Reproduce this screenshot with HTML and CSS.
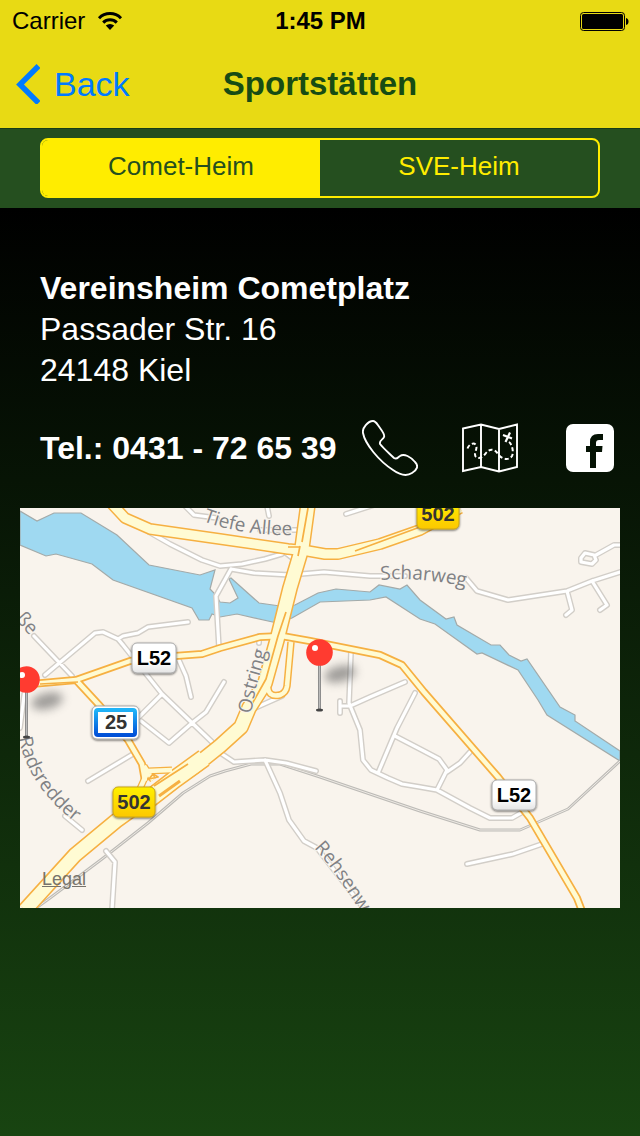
FILE: index.html
```html
<!DOCTYPE html>
<html lang="de">
<head>
<meta charset="utf-8">
<meta name="viewport" content="width=device-width, initial-scale=1">
<title>Sportstätten</title>
<link rel="stylesheet" href="styles.css">
</head>
<body>
<header class="top">
  <div class="status">
    <div class="status-left">
      <span>Carrier</span>
      <svg class="wifi" viewBox="0 0 26 20" aria-hidden="true">
        <path d="M2 7.2A15.500 15.500 0 0 1 24 7.200" fill="none" stroke="#000" stroke-width="3"/>
        <path d="M6.200 11.600A9.500 9.500 0 0 1 19.800 11.600" fill="none" stroke="#000" stroke-width="3"/>
        <path d="M8.800 14.600A6 6 0 0 1 17.200 14.600L13 19z"/>
      </svg>
    </div>
    <span class="clock">1:45 PM</span>
    <svg class="battery" viewBox="0 0 50 20" aria-hidden="true">
      <rect x="1.500" y="1.500" width="44" height="18" rx="3" fill="none" stroke="#000"/>
      <rect x="3" y="3" width="41" height="15" rx="1.500"/>
      <path d="M47 7Q49.500 7.500 49.500 10.500T47 14z"/>
    </svg>
  </div>
  <nav class="nav">
    <a class="back" href="#">
      <svg class="chevron" viewBox="0 0 24 40" aria-hidden="true"><path d="M22.500 2L4 20.500L22.500 39" fill="none" stroke="#007aff" stroke-width="5.500"/></svg>
      <span>Back</span>
    </a>
    <h1 class="title">Sportstätten</h1>
  </nav>
</header>

<div class="filter">
  <div class="segments" role="group" aria-label="Vereinsheim">
    <button class="segment segment-on" type="button" aria-pressed="true">Comet-Heim</button>
    <button class="segment" type="button" aria-pressed="false">SVE-Heim</button>
  </div>
</div>

<main class="content">
  <address class="address">
    <strong>Vereinsheim Cometplatz</strong>
    <span>Passader Str. 16</span>
    <span>24148 Kiel</span>
  </address>
  <div class="contact">
    <strong class="phone-number">Tel.: 0431 - 72 65 39</strong>
    <a class="action" href="tel:+49431726539" aria-label="Anrufen">
      <svg class="icon" viewBox="0 0 56 56" aria-hidden="true"><path d="M1 13C0 8 6 1 11 1C14 1 15 4 18 8C21 12 23 15 22 17C21 20 17 20 18 24C22 29 28 34 32 38C35 40 36 37 38 36C42 33 49 37 53 42C57 46 55 50 50 53C44 57 38 55 31 50C17 41 3 24 1 13Z" fill="none" stroke="#fff" stroke-width="1.900"/></svg>
    </a>
    <button class="action" type="button" aria-label="Route anzeigen">
      <svg class="icon" viewBox="0 0 56 56" aria-hidden="true" fill="none" stroke="#fff">
        <path d="M1 8.500L19 4.500L37 9L55 4.500V47L37 51.500L19 47L1 51ZM19 4.500V47M37 9V51.500" stroke-width="1.900"/>
        <path d="M5.500 28.500C7 24 12 22 14 25C16 29 11 34 14 37C17 40 22 36 24 33C28 28 33 29 36 34C39 39 47 41 50 36C52 32 50 24 47 22" stroke-width="2" stroke-dasharray="4 2.500"/>
        <path d="M41 15L50 18.500M48 12.500L43.500 22" stroke-width="2.200"/>
      </svg>
    </button>
    <a class="action" href="#" aria-label="Facebook">
      <svg class="icon" viewBox="0 0 56 56" aria-hidden="true"><rect x="4" y="4" width="48" height="48" rx="7" fill="#fff"/><path d="M28 48V32H24V26H28V22Q28 14 36 14H41V20H37Q34 20 34 23V26H40.500L40 32H34V48Z" fill="#051204"/></svg>
    </a>
  </div>

  <section class="map" aria-label="Karte">
    <svg class="map-canvas" viewBox="0 0 600 400" preserveAspectRatio="xMidYMid slice" role="img" aria-label="Karte der Umgebung">
      <defs>
        <linearGradient id="white-sign" x1="0" y1="0" x2="0" y2="1"><stop offset=".6" stop-color="#fff"/><stop offset="1" stop-color="#e4e4e4"/></linearGradient>
        <linearGradient id="yellow-sign" x1="0" y1="0" x2="0" y2="1"><stop offset="0" stop-color="#fff000"/><stop offset="1" stop-color="#fcc800"/></linearGradient>
        <linearGradient id="blue-sign" x1="0" y1="0" x2="0" y2="1"><stop offset="0" stop-color="#20b4f8"/><stop offset="1" stop-color="#0050d8"/></linearGradient>
        <linearGradient id="needle" x1="0" y1="0" x2="1" y2="0"><stop offset="0" stop-color="#777"/><stop offset=".5" stop-color="#bbb"/><stop offset="1" stop-color="#777"/></linearGradient>
        <filter id="soft" x="-50%" y="-100%" width="200%" height="300%"><feGaussianBlur stdDeviation="5"/></filter>
        <filter id="sign-shadow" x="-20%" y="-20%" width="140%" height="150%"><feDropShadow dx="0" dy="1" stdDeviation="1" flood-opacity=".6"/></filter>
        <path id="streets" d="M165 -2L174 7L197 10M129 24L150 36L182 52L200 58L222 56L245 51L262 46M240 22H281L288 30M326 6L354 -3M249 8L247 -2M211 61L234 65L270 67L304 64L350 68L385 68M211 61L196 88L199 140M262 42L275 52M446 70L457 83L488 92L547 83L572 73L600 64M547 83L552 102L546 107M572 73L587 97L580 102M576 47L594 37L602 37M561 50L565 45L574 47L576 52L572 56L561 54ZM14 128L52 168M25 167L75 125L83 124L98 131L103 137L142 186L192 234L202 246L214 254L245 252L266 255L296 263M98 131L103 128L118 125L128 119L168 114M158 150L166 168L171 189M142 186L118 210M204 174L186 204L172 215L149 235L121 213M68 273L113 246M86 343L95 354L92 402M245 252L260 285L269 312L284 333L297 340L345 402M331 144L329 195L340 222L343 252L351 262L368 270L382 276L400 279L417 282L450 300L470 310L492 310L506 302M320 193V205M320 198H330L350 189L385 174M395 185L377 220L358 265M375 228L400 241L419 251L427 262L417 282M427 264L440 255L450 244M447 356L493 346L525 335M0 220L5 180M45 308L62 322M239 128V135M235 200L262 188"/>
        <path id="slip" d="M248 176Q247 190 260 187Q266 185 267 178L271 134"/>
        <path id="trunk" d="M92 -4L105 10L130 21L200 31L268 41L288 43L305 46L318 46L360 36L400 22L440 0"/>
        <path id="local" d="M0 177L56 172L110 153L155 148L182 146L200 140L240 129L262 128L290 133L360 147L382 157L404 184L478 269L510 310L557 390L562 403M56 172L80 198L108 232L122 256L125 273"/>
        <path id="main" d="M288 -4L282 40L270 80L257 132L245 175L229 200L221 219L200 238L175 258L142 280L96 313L55 347L5 402"/>
        <path id="merge" d="M124 295L155 271L184 250"/>
        <path id="ramps" d="M118 285L128 263L152 262M124 258L133 272"/>
        <path id="ostring-line" d="M231 206L236 180L249 134"/>
        <path id="tiefe-line" d="M183 13Q225 29 284 27"/>
        <path id="scharweg-line" d="M361 72Q400 68 456 81"/>
        <path id="rads-line" d="M-1 230Q8 280 60 318"/>
        <path id="rehsen-line" d="M294 340Q314 361 350 419"/>
        <path id="strasse-line" d="M-5 111L18 137"/>
      </defs>
      <rect width="600" height="400" fill="#f9f4ed"/>
      <path d="M0 3L17 13L34 5H61L97 27L129 57L180 67L195 62L190 81L196 87L200 94L210 95L218 90L209 71L211 70L239 95L260 98L275 97L298 85L316 81L350 84L359 77L380 81L387 77L400 92L426 111L434 109L437 117L471 137H480L489 147L501 153L507 151L540 199L555 207V213L600 243V253L527 207L518 192L498 162L462 145L457 146L415 116L400 111L366 89L350 92L300 94L272 110L257 115L217 106L200 109L192 106L189 112H179L172 100L93 72L72 56L36 46L26 48L0 37Z" fill="#9fd9f1" stroke="#a3aaa9" stroke-width="1.200"/>
      <g fill="none" stroke-linejoin="round">
        <path d="M12 403L30 390L82 351L128 315L163 285L190 268L205 263L231 256H260L300 269L400 303L460 322H500L548 301L600 253" stroke="#bdbbb7" stroke-width="3"/>
        <path d="M12 403L30 390L82 351L128 315L163 285L190 268L205 263L231 256H260L300 269L400 303L460 322H500L548 301L600 253" stroke="#eeeae4"/>
        <use href="#streets" stroke="#d2cec8" stroke-width="6" stroke-linecap="round"/>
        <use href="#streets" stroke="#fff" stroke-width="3.200" stroke-linecap="round"/>
        <g stroke="#f6b042">
          <use href="#slip" stroke-width="7.500"/>
          <use href="#trunk" stroke-width="12"/>
          <use href="#local" stroke-width="8"/>
          <use href="#main" stroke-width="16"/>
          <use href="#merge" stroke-width="19"/>
          <use href="#ramps" stroke-width="7"/>
        </g>
        <g stroke="#fffbd3">
          <use href="#slip" stroke-width="4.500"/>
          <use href="#trunk" stroke-width="9"/>
          <use href="#local" stroke-width="4.500"/>
          <use href="#main" stroke-width="13"/>
          <use href="#merge" stroke-width="16"/>
          <use href="#ramps" stroke-width="4.500"/>
        </g>
        <path d="M288 0L282 34M280 38L278 48M266 104L258 128L246 171L232 196M335 43L400 19M268 39H279M20 176L58 174M129 271L133 266L138 269ZM134 278L168 256" stroke="#f6b042" stroke-width="1.700"/>
        <path d="M139 288L160 273" stroke="#f6b042" stroke-width="3"/>
      </g>

      <g class="street-name">
        <text><textPath href="#tiefe-line">Tiefe Allee</textPath></text>
        <text><textPath href="#scharweg-line">Scharweg</textPath></text>
        <text><textPath href="#ostring-line">Ostring</textPath></text>
        <text><textPath href="#rads-line">Radsredder</textPath></text>
        <text><textPath href="#rehsen-line">Rehsenweg</textPath></text>
        <text><textPath href="#strasse-line">ße</textPath></text>
      </g>

      <g class="sign">
        <rect x="112" y="135" width="44" height="30" rx="5" fill="url(#white-sign)" stroke="#aaa" filter="url(#sign-shadow)"/>
        <text x="134" y="157">L52</text>
        <rect x="472" y="272" width="44" height="30" rx="5" fill="url(#white-sign)" stroke="#aaa" filter="url(#sign-shadow)"/>
        <text x="494" y="294">L52</text>
      </g>
      <g class="sign sign-dark">
        <rect x="93" y="279" width="42" height="30" rx="5" fill="url(#yellow-sign)" stroke="#c9a51b" filter="url(#sign-shadow)"/>
        <text x="114" y="301">502</text>
        <rect x="397" y="-9" width="42" height="30" rx="5" fill="url(#yellow-sign)" stroke="#c9a51b" filter="url(#sign-shadow)"/>
        <text x="418" y="13">502</text>
        <rect x="72" y="198" width="47" height="33" rx="5" fill="#fff" stroke="#aaa" filter="url(#sign-shadow)"/>
        <rect x="76" y="202" width="39" height="25" rx="2" fill="#fff" stroke="url(#blue-sign)" stroke-width="4"/>
        <text x="96" y="221">25</text>
      </g>

      <g>
        <ellipse cx="320" cy="166" rx="16" ry="8" transform="rotate(-14 320 166)" fill="#555" opacity=".55" filter="url(#soft)"/>
        <rect x="298" y="156" width="3" height="46" fill="url(#needle)"/>
        <ellipse cx="299.500" cy="202" rx="3.500" ry="1.500" fill="#444"/>
        <circle cx="299.500" cy="144.500" r="13.300" fill="#ff3b30"/>
        <circle cx="295" cy="140" r="3" fill="#fff"/>
      </g>
      <g>
        <ellipse cx="27" cy="193" rx="16" ry="8" transform="rotate(-14 27 193)" fill="#555" opacity=".55" filter="url(#soft)"/>
        <rect x="5" y="183" width="3" height="46" fill="url(#needle)"/>
        <ellipse cx="6.500" cy="229" rx="3.500" ry="1.500" fill="#444"/>
        <circle cx="6.500" cy="171.500" r="13.300" fill="#ff3b30"/>
        <circle cx="2" cy="167" r="3" fill="#fff"/>
      </g>
    </svg>
    <a class="legal" href="#">Legal</a>
  </section>
</main>
</body>
</html>
```
FILE: styles.css
```css
* {
  box-sizing: border-box;
}

html {
  min-height: 100%;
}

body {
  margin: 0;
  min-height: 100vh;
  display: flex;
  flex-direction: column;
  background: #000;
  color: #fff;
  font-family: "Liberation Sans", Arial, sans-serif;
}

.top {
  background: #e8da14;
  border-bottom: 1px solid #173c17;
}

.status {
  display: grid;
  grid-template-columns: 1fr auto 1fr;
  align-items: center;
  height: 40px;
  padding: 1px 11px 0 12px;
  color: #000;
  font-size: 24px;
}

.status-left {
  display: flex;
  align-items: center;
  gap: 12px;
}

.wifi {
  width: 26px;
  height: 20px;
}

.clock {
  font-weight: bold;
}

.battery {
  justify-self: end;
  width: 50px;
  height: 20px;
}

.nav {
  display: grid;
  grid-template-columns: 1fr auto 1fr;
  align-items: center;
  height: 88px;
  padding: 0 16px;
}

.back {
  display: flex;
  align-items: center;
  gap: 14px;
  color: #007aff;
  font-size: 34px;
  text-decoration: none;
}

.chevron {
  width: 24px;
  height: 40px;
}

.title {
  margin: 0;
  color: #174c14;
  font-size: 33px;
}

.filter {
  padding: 9px 40px 10px;
  background: #254f1f;
}

.segments {
  display: flex;
  height: 60px;
  border: 2px solid #ffed00;
  border-radius: 8px;
  overflow: hidden;
}

.segment {
  flex: 1;
  padding: 0 0 4px;
  border: 0;
  background: transparent;
  color: #ffed00;
  font-family: inherit;
  font-size: 26px;
}

.segment-on {
  background: #ffed00;
  color: #254f1f;
}

.content {
  flex: 1;
  padding: 60px 20px;
  background: linear-gradient(#000, #184411);
}

.address {
  display: flex;
  flex-direction: column;
  padding-left: 20px;
  font-size: 32px;
  font-style: normal;
  line-height: 41px;
}

.contact {
  display: flex;
  align-items: center;
  gap: 44px;
  margin: 29px 0 32px;
  padding: 0 2px 0 20px;
}

.phone-number {
  flex: 1;
  margin-right: -44px;
  font-size: 32px;
  white-space: nowrap;
}

.action {
  flex: none;
  padding: 0;
  border: 0;
  background: none;
}

.icon {
  display: block;
  width: 56px;
  height: 56px;
}

.map {
  position: relative;
  aspect-ratio: 3 / 2;
  overflow: hidden;
}

.map-canvas {
  display: block;
  width: 100%;
  height: 100%;
}

.street-name {
  fill: #808184;
  stroke: #f9f4ed;
  stroke-width: 2px;
  paint-order: stroke;
  font-family: "Open Sans", "Noto Sans", sans-serif;
  font-size: 19px;
}

.sign {
  fill: #000;
  font-size: 20px;
  font-weight: bold;
  text-anchor: middle;
}

.sign-dark {
  fill: #333;
}

.legal {
  position: absolute;
  left: 22px;
  bottom: 18px;
  color: #77736b;
  font-size: 18px;
}
```
